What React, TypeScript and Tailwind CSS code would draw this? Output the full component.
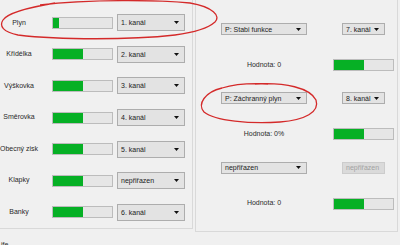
import React from 'react';

type ComboProps = { text: string; className: string; disabled?: boolean };

// Windows-style combobox
function Combo({ text, className, disabled }: ComboProps) {
  return (
    <div
      className={`flex items-center justify-between border pl-[3px] pr-[5px] ${
        disabled ? 'border-[#cccccc] bg-[#dadada] text-[#a2a2a2]' : 'border-[#adadad] bg-[#e3e3e3] text-[#222]'
      } ${className}`}
    >
      <span className="leading-none whitespace-nowrap">{text}</span>
      <svg width="5" height="3" viewBox="0 0 5 3">
        <path d="M0 0 H5 L2.5 3 Z" fill={disabled ? '#a2a2a2' : '#111'} />
      </svg>
    </div>
  );
}

function Bar({ value }: { value: number }) {
  return (
    <div className="h-[12px] w-[61px] shrink-0 border border-[#bcbcbc] bg-[#e6e6e6]">
      <div className="h-full bg-[#06b025]" style={{ width: `${value}%` }} />
    </div>
  );
}

const channels = [
  { label: 'Plyn', value: 10, combo: '1. kanál' },
  { label: 'Křidélka', value: 51, combo: '2. kanál' },
  { label: 'Výškovka', value: 51, combo: '3. kanál' },
  { label: 'Směrovka', value: 51, combo: '4. kanál' },
  { label: 'Obecný zisk', value: 51, combo: '5. kanál' },
  { label: 'Klapky', value: 51, combo: 'nepřiřazen' },
  { label: 'Banky', value: 51, combo: '6. kanál' },
];

const functions = [
  { fn: 'P: Stabi funkce', ch: '7. kanál', value: 'Hodnota: 0', disabled: false },
  { fn: 'P: Záchranný plyn', ch: '8. kanál', value: 'Hodnota: 0%', disabled: false },
  { fn: 'nepřiřazen', ch: 'nepřiřazen', value: 'Hodnota: 0', disabled: true },
];

export default function App() {
  return (
    <div className="relative h-[245px] w-[400px] overflow-hidden bg-[#f0f0f0] text-[7px] text-[#2a2a2a] font-['Liberation_Sans',Arial,sans-serif]">
      <div className="flex h-[232px]">
        {/* Left group: channel mapping */}
        <div className="flex h-[229px] w-[193px] flex-col border-r border-b border-[#d9d9d9] pt-[7px]">
          {channels.map((c) => (
            <div key={c.label} className="flex h-[32px] items-center">
              <div className="w-[38px] text-center whitespace-nowrap">{c.label}</div>
              <div className="ml-[14px]">
                <Bar value={c.value} />
              </div>
              <Combo text={c.combo} className="ml-[4px] h-[17px] w-[68px]" />
            </div>
          ))}
        </div>

        {/* Right group: functions */}
        <div className="ml-[2px] flex h-[232px] w-[203px] flex-col border-l border-r border-b border-[#d9d9d9] pt-[23px]">
          {functions.map((f) => (
            <div key={f.fn} className="flex h-[73px] flex-col">
              <div className="flex h-[12px] items-center">
                <Combo text={f.fn} className="ml-[25px] h-[12px] w-[86px]" />
                <div className="ml-[26px] flex w-[61px] justify-center">
                  <Combo text={f.ch} disabled={f.disabled} className="h-[12px] w-[43px]" />
                </div>
              </div>
              <div className="mt-[24px] flex h-[12px] items-center">
                <div className="ml-[25px] w-[86px] text-center">{f.value}</div>
                <div className="ml-[26px]">
                  <Bar value={51} />
                </div>
              </div>
            </div>
          ))}
        </div>
      </div>

      <div className="pt-[9px] pl-[1px] leading-none">ife</div>

      {/* red hand-drawn annotations */}
      <svg className="pointer-events-none absolute inset-0" width="400" height="245" viewBox="0 0 400 245">
        <path
          d="M 40 5 C 90 -1, 160 0, 190 3 C 213 7, 221 16, 215 22 C 206 30, 190 33, 175 35 C 130 40, 60 40, 18 35 C 3 32, -1 26, 3 20 C 7 14, 25 8, 55 3"
          fill="none"
          stroke="#d42a2a"
          strokeWidth="1.3"
        />
        <path
          d="M 255 84 C 285 82, 310 88, 316 100 C 320 112, 305 120, 280 122 C 250 124, 215 121, 204 112 C 197 104, 205 92, 222 88 C 235 84, 250 83, 268 84"
          fill="none"
          stroke="#d42a2a"
          strokeWidth="1.3"
        />
      </svg>
    </div>
  );
}
